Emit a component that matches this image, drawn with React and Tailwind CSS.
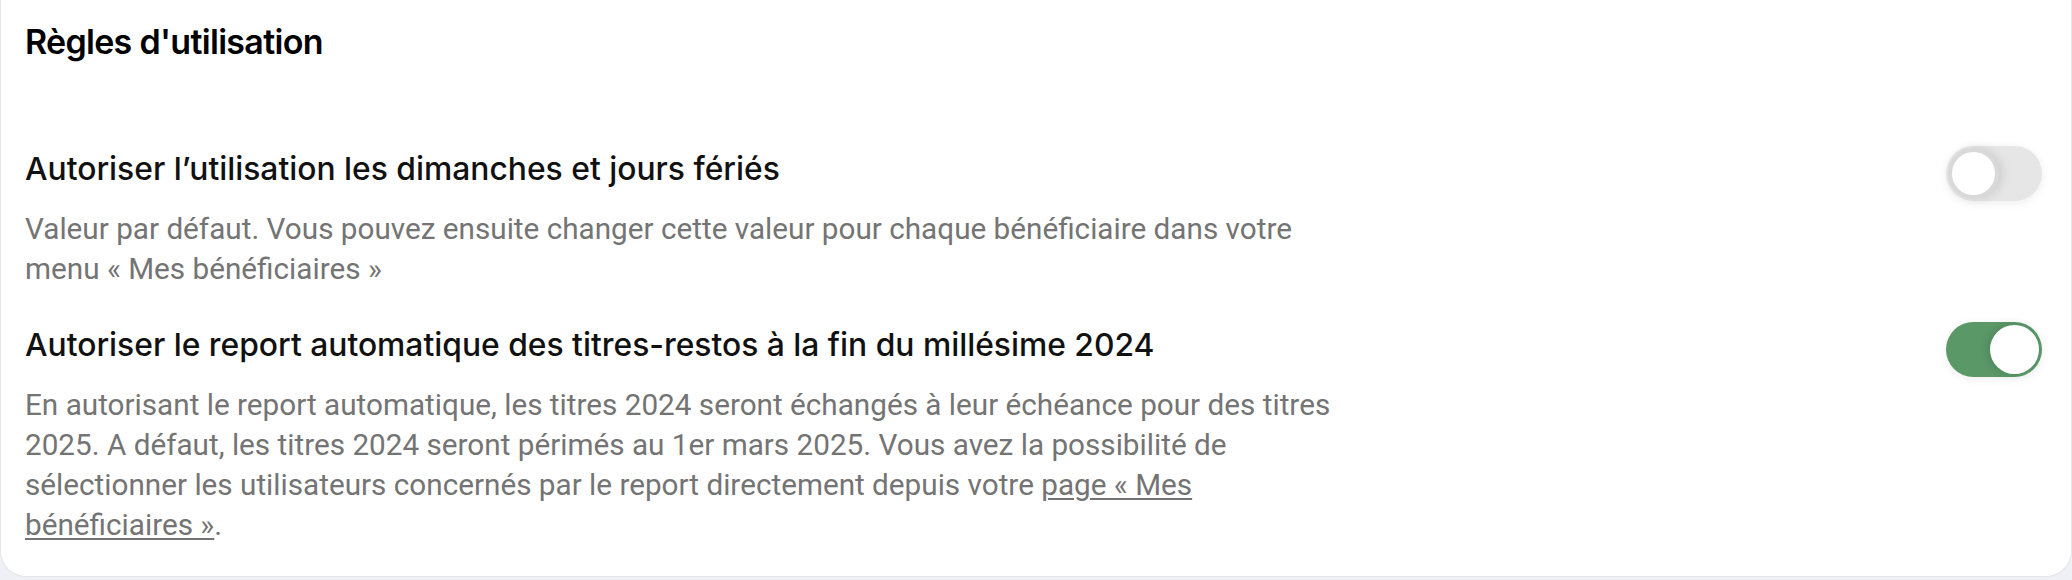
import React from "react";

const Toggle = ({ on }) => {
  return (
    <button
      className={
        "relative w-[96px] h-[55px] rounded-full shrink-0 shadow-[0_2px_10px_rgba(0,0,0,0.07)] " +
        (on ? "bg-[#5a9868]" : "bg-[#e6e6e6]")
      }
    >
      {on ? (
        <span className="absolute right-[3px] top-[3px] w-[49px] h-[49px] rounded-full bg-white shadow-[-3px_0_8px_rgba(0,0,0,0.12)]" />
      ) : (
        <span className="absolute left-[2px] top-[2px] w-[51px] h-[51px] rounded-full bg-white border-[4px] border-[#d9d9d9] shadow-[4px_0_10px_rgba(0,0,0,0.10)]" />
      )}
    </button>
  );
};

const Setting = ({ title, on, children }) => {
  return (
    <div className="flex justify-between items-start">
      <div className="max-w-[1320px]">
        <h3
          className="text-[31.8px] leading-[40px] font-medium text-[#111]"
          style={{ fontFamily: "Inter, 'Liberation Sans', sans-serif" }}
        >
          {title}
        </h3>
        <p className="mt-[20px] text-[29.7px] leading-[40px] text-[#747474]">{children}</p>
      </div>
      <div className="-mt-[3px]">
        <Toggle on={on} />
      </div>
    </div>
  );
};

export default function App() {
  return (
    <div className="w-[2072px] h-[580px] bg-[#eef0f5]" style={{ fontFamily: "Roboto, 'Liberation Sans', sans-serif" }}>
      <div className="h-[577px] bg-white border-x border-b border-[#e3e5ec] rounded-b-[26px] pl-[24px] pr-[29px] pt-[22px]">
        <h2
          className="text-[34px] leading-[40px] font-semibold tracking-[-0.7px] text-black"
          style={{ fontFamily: "Inter, 'Liberation Sans', sans-serif" }}
        >
          Règles d'utilisation
        </h2>
        <div className="mt-[87px]">
          <Setting title="Autoriser l’utilisation les dimanches et jours fériés" on={false}>
            Valeur par défaut. Vous pouvez ensuite changer cette valeur pour chaque bénéficiaire dans votre menu « Mes bénéficiaires »
          </Setting>
        </div>
        <div className="mt-[36px]">
          <Setting title="Autoriser le report automatique des titres-restos à la fin du millésime 2024" on={true}>
            En autorisant le report automatique, les titres 2024 seront échangés à leur échéance pour des titres 2025. A défaut, les titres 2024 seront périmés au 1er mars 2025. Vous avez la possibilité de sélectionner les utilisateurs concernés par le report directement depuis votre{" "}
            <a href="#" className="underline underline-offset-[3px] decoration-[2px]">page « Mes bénéficiaires »</a>.
          </Setting>
        </div>
      </div>
    </div>
  );
}
